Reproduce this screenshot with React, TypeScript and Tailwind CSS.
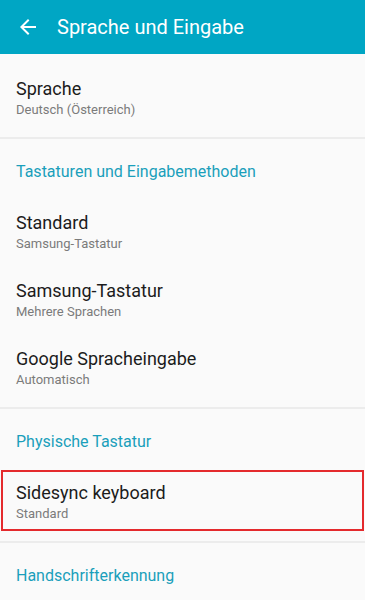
export default function App() {
  return (
    <div className="w-[365px] h-[600px] overflow-hidden bg-[#fafafa] font-['Roboto',sans-serif]">
      <header className="h-[54px] bg-[#00a6c4] flex items-center pl-4">
        <svg width="24" height="24" viewBox="0 0 24 24" fill="white">
          <path d="M20 11H7.83l5.59-5.59L12 4l-8 8 8 8 1.41-1.41L7.83 13H20v-2z" />
        </svg>
        <h1 className="ml-[17px] text-[20px] leading-7 text-white">Sprache und Eingabe</h1>
      </header>

      <div className="pt-[23px] pb-[18px] px-4">
        <Item title="Sprache" sub="Deutsch (Österreich)" bare />
      </div>
      <div className="h-[2px] bg-[#ececec]" />

      <Section title="Tastaturen und Eingabemethoden" />
      <div className="pb-[5px]">
        <Item title="Standard" sub="Samsung-Tastatur" />
        <Item title="Samsung-Tastatur" sub="Mehrere Sprachen" />
        <Item title="Google Spracheingabe" sub="Automatisch" />
      </div>
      <div className="h-[2px] bg-[#ececec]" />

      <Section title="Physische Tastatur" />
      <div className="pb-[5px]">
        <div className="relative">
          <Item title="Sidesync keyboard" sub="Standard" />
          <div className="absolute left-px right-px top-[2px] bottom-[5px] border-2 border-[#e42a2d]" />
        </div>
      </div>
      <div className="h-[2px] bg-[#ececec]" />

      <Section title="Handschrifterkennung" />
    </div>
  );
}

function Section({ title }: { title: string }) {
  return (
    <div className="pt-[21px] pb-[14px] px-4 text-[16px] leading-6 text-[#1a9fbb]">{title}</div>
  );
}

function Item({ title, sub, bare }: { title: string; sub: string; bare?: boolean }) {
  return (
    <div className={bare ? "" : "px-4 py-[13px]"}>
      <div className="text-[18px] leading-6 text-[#1c1c1c]">{title}</div>
      <div className="text-[13px] leading-[18px] text-[#7b7b7b]">{sub}</div>
    </div>
  );
}
